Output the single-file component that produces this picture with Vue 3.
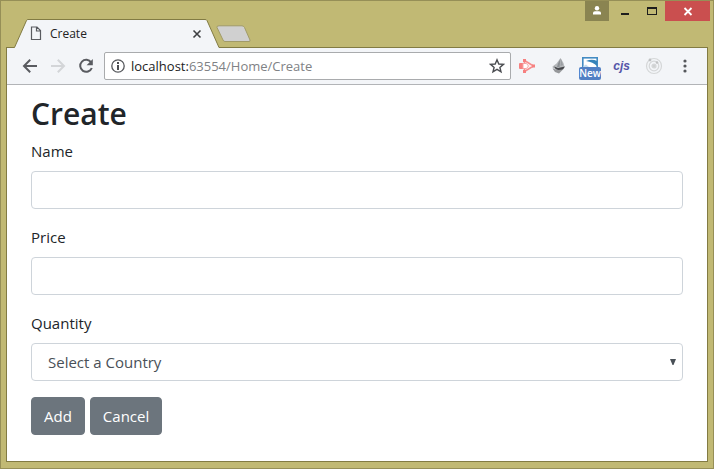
<script setup>
import { ref } from 'vue'

const name = ref('')
const price = ref('')
const country = ref('')
</script>

<template>
  <div class="window">
    <header class="titlebar">
      <div class="tabs">
        <div class="tab">
          <svg class="tab-shape" width="206" height="29" viewBox="0 0 206 29" aria-hidden="true">
            <path d="M0 28.5H.5L12.500 1.500Q13 .5 14 .5H191Q192.500 .5 193 1.500L205 28.500V29H0Z" fill="#f3f5f8" />
            <path d="M0 28.500H.5L12.500 1.500Q13 .5 14 .5H191Q192.500 .5 193 1.500L205 28.500" fill="none" stroke="#827b43" />
          </svg>
          <div class="tab-content">
            <svg width="12" height="15" viewBox="0 0 12 15" fill="none" stroke="#5a5c60" stroke-width="1.200" aria-hidden="true">
              <path d="M1.500 1H7L10.500 4.500V13.500H1.500ZM6.500 1V5H10.500" />
            </svg>
            <span class="tab-title">Create</span>
            <button class="bare" type="button" aria-label="Close tab">
              <svg width="10" height="10" viewBox="0 0 10 10" stroke="#3e4043" stroke-width="1.600">
                <path d="M1.500 1.500L8.500 8.500M8.500 1.500L1.500 8.500" />
              </svg>
            </button>
          </div>
        </div>
        <button class="bare new-tab" type="button" aria-label="New tab">
          <svg width="36" height="18" viewBox="0 0 36 18">
            <path d="M3 .8H26Q27.500 .8 28.500 2.500L34 15Q34.500 16.500 33 16.500H9Q7.500 16.500 7 15L1 2.500Q.5 .8 3 .8Z" fill="#d0d0d0" stroke="#a19b68" />
          </svg>
        </button>
      </div>
      <div class="controls">
        <button class="control user" type="button" aria-label="User profile">
          <svg width="10" height="10" viewBox="0 0 10 10" fill="#fff">
            <circle cx="5" cy="2.300" r="2.200" />
            <path d="M1 8.500V7Q1 5.300 3 5.300H7Q9 5.300 9 7V8.500Z" />
          </svg>
        </button>
        <button class="control" type="button" aria-label="Minimize">
          <svg width="10" height="10" viewBox="0 0 10 10"><path d="M1 7H9V9H1Z" fill="#1d1d1d" /></svg>
        </button>
        <button class="control" type="button" aria-label="Maximize">
          <svg width="10" height="10" viewBox="0 0 10 10"><path d="M0 1H10V9H0ZM1 3V8H9V3Z" fill="#1d1d1d" fill-rule="evenodd" /></svg>
        </button>
        <button class="control close" type="button" aria-label="Close">
          <svg width="10" height="10" viewBox="0 0 10 10" stroke="#fff" stroke-width="1.800"><path d="M1.500 2L8.500 9M8.500 2L1.500 9" /></svg>
        </button>
      </div>
    </header>

    <div class="browser">
      <nav class="toolbar" aria-label="Browser toolbar">
        <div class="history">
          <button class="bare" type="button" aria-label="Back">
            <svg width="16" height="16" viewBox="0 0 16 16" fill="none" stroke="#595b60" stroke-width="2">
              <path d="M15 8H2.500M8.200 1.700L2 8L8.200 14.300" />
            </svg>
          </button>
          <button class="bare" type="button" aria-label="Forward" disabled>
            <svg width="16" height="16" viewBox="0 0 16 16" fill="none" stroke="#d3d5d8" stroke-width="2">
              <path d="M1 8H13.500M7.800 1.700L14 8L7.800 14.300" />
            </svg>
          </button>
          <button class="bare" type="button" aria-label="Reload">
            <svg width="16" height="16" viewBox="0 0 16 16" fill="none" stroke="#595b60" stroke-width="2">
              <path d="M13.200 4.500A6 6 0 1 0 13.800 10" />
              <path d="M14.800 1V7.200H8.600Z" fill="#595b60" stroke="none" />
            </svg>
          </button>
        </div>
        <div class="address">
          <svg width="14" height="14" viewBox="0 0 14 14" aria-hidden="true">
            <circle cx="7" cy="7" r="6.200" fill="none" stroke="#55575b" stroke-width="1.300" />
            <path d="M6 3H8V5H6ZM6 6H8V11H6Z" fill="#4b4d51" />
          </svg>
          <span class="url"><span class="host">localhost:</span>63554/Home/Create</span>
          <button class="bare" type="button" aria-label="Bookmark this page">
            <svg width="16" height="16" viewBox="0 0 16 16" fill="none" stroke="#4b4d51" stroke-width="1.400">
              <path d="M8 1.800L9.800 6L14.400 6.400L10.900 9.400L12 13.800L8 11.400L4 13.800L5.100 9.400L1.600 6.400L6.200 6Z" />
            </svg>
          </button>
        </div>
        <div class="extensions">
          <button class="bare" type="button" aria-label="Screen capture">
            <svg width="18" height="16" viewBox="0 0 18 16">
              <path d="M6.500 2.500L15.500 8L6.500 13.500Z" fill="#fdf3f3" stroke="#f68f8f" stroke-width="1.600" />
              <rect x="1" y="5" width="4.500" height="6" rx="1" fill="#f68080" />
              <path d="M5 5.500H8.500L10.500 8L8.500 10.500H5Z" fill="#fff" stroke="#f9a5a5" />
              <path d="M5 1H8V4H5ZM5 12H8V15H5ZM14 6.500H17V9.500H14Z" fill="#f68080" />
            </svg>
          </button>
          <button class="bare" type="button" aria-label="Page inspector">
            <svg width="16" height="18" viewBox="0 0 16 18">
              <path d="M9.500 1L12.500 6L13.500 10L9 12L2 11.500L1.500 9.500L5.500 6.500Z" fill="#b4b7ba" />
              <path d="M9.500 1.500L7 6.500L6 10L8.500 10Z" fill="#8b8f93" />
              <path d="M10 2L9.500 9L12 8Z" fill="#9a9ea2" />
              <path d="M3 9.500L7 11L14 9.500L12 12.500L9 13.500L5 12.500Z" fill="#45474b" />
              <path d="M1.500 11.500L7 13L12 12.500L8 16.500L4 15Z" fill="#96989b" />
            </svg>
          </button>
          <button class="bare" type="button" aria-label="New screenshots">
            <svg class="shot" width="22" height="24" viewBox="0 0 22 24">
              <rect x="3.800" y="1.800" width="14.400" height="11" fill="#fff" stroke="#428bc3" stroke-width="1.600" />
              <path d="M7 5Q13 2.500 18 5V10Q14 6 7 5Z" fill="#3583b9" />
              <path d="M4.500 10L7 8.500L10 11H4.500Z" fill="#c4dced" />
              <rect y="11" width="22" height="13" rx="2" fill="#5180c4" />
              <text x="11" y="21" text-anchor="middle">New</text>
            </svg>
          </button>
          <button class="bare cjs" type="button">cjs</button>
          <button class="bare" type="button" aria-label="Orbit">
            <svg width="18" height="18" viewBox="0 0 18 18" fill="none" stroke="#d5d7d8" stroke-width="1.200">
              <circle cx="9" cy="9" r="7.500" /><circle cx="9" cy="9" r="4.800" />
              <circle cx="9" cy="9" r="2" fill="#cfd1d2" />
              <circle cx="5" cy="3" r="1.400" fill="#bfc1c2" stroke="none" /><circle cx="12" cy="5.500" r="1.300" fill="#bfc1c2" stroke="none" />
            </svg>
          </button>
          <button class="bare menu" type="button" aria-label="Menu">
            <svg width="4" height="14" viewBox="0 0 4 14" fill="#55575b">
              <circle cx="2" cy="2" r="1.600" /><circle cx="2" cy="7" r="1.600" /><circle cx="2" cy="12" r="1.600" />
            </svg>
          </button>
        </div>
      </nav>

      <main class="page">
        <h2>Create</h2>
        <form @submit.prevent>
          <div class="field">
            <label for="name">Name</label>
            <input id="name" v-model="name" class="form-control" type="text">
          </div>
          <div class="field">
            <label for="price">Price</label>
            <input id="price" v-model="price" class="form-control" type="text">
          </div>
          <div class="field">
            <label for="quantity">Quantity</label>
            <div class="select-wrap">
              <select id="quantity" v-model="country" class="form-control">
                <option value="">Select a Country</option>
              </select>
              <svg class="arrow" width="6" height="6" viewBox="0 0 6 6" aria-hidden="true"><path d="M0 0H6L3.500 6H2.500Z" fill="#495057" /></svg>
            </div>
          </div>
          <div class="actions">
            <button class="btn" type="submit">Add</button>
            <button class="btn" type="button">Cancel</button>
          </div>
        </form>
      </main>
    </div>
  </div>
</template>

<style>
body {
  margin: 0;
}
</style>

<style scoped>
* {
  box-sizing: border-box;
}

.window {
  display: flex;
  flex-direction: column;
  min-height: 100vh;
  padding: 0 5px 6px;
  border: 1px solid #968f57;
  background: #c1b974;
  font-family: "Open Sans", "Noto Sans", sans-serif;
}

svg {
  display: block;
}

button,
input,
select {
  font-family: inherit;
}

.bare {
  padding: 0;
  border: 0;
  background: none;
  color: inherit;
}

.titlebar {
  display: flex;
  align-items: flex-end;
  justify-content: space-between;
  height: 46px;
  padding-left: 8px;
}

.tabs {
  display: flex;
  align-items: center;
}

.tab {
  display: grid;
  z-index: 1;
  margin-bottom: -1px;
}

.tab-shape,
.tab-content {
  grid-area: 1 / 1;
}

.tab-content {
  display: flex;
  align-items: center;
  gap: 8px;
  padding: 0 18px 0 16px;
}

.tab-title {
  flex: 1;
  color: #222;
  font-size: 12px;
}

.new-tab {
  margin-left: -4px;
  padding-top: 2px;
}

.controls {
  display: flex;
  align-self: flex-start;
  margin-right: -2px;
}

.control {
  display: grid;
  place-items: center;
  width: 27px;
  height: 20px;
  padding: 0;
  border: 0;
  background: none;
}

.user {
  width: 24px;
  margin-right: 2px;
  background: #8a8451;
}

.close {
  width: 45px;
  background: #ca4f4f;
}

.browser {
  display: flex;
  flex: 1;
  flex-direction: column;
  border: 1px solid #827b43;
  background: #fff;
}

.toolbar {
  display: flex;
  align-items: center;
  gap: 10px;
  height: 37px;
  padding: 0 16px 0 15px;
  border-bottom: 1px solid #b2b4b7;
  background: #f3f5f8;
}

.history {
  display: flex;
  gap: 12px;
}

.address {
  display: flex;
  flex: 1;
  align-items: center;
  gap: 6px;
  height: 28px;
  padding: 0 5px 0 6px;
  border: 1px solid #a9abad;
  border-radius: 2px;
  background: #fff;
}

.url {
  flex: 1;
  color: #808285;
  font-size: 13px;
  white-space: nowrap;
}

.host {
  color: #222;
}

.extensions {
  display: flex;
  align-items: center;
  gap: 15px;
  margin-left: -3px;
}

.shot {
  margin: 4px -3px 0;
}

.shot text {
  fill: #fff;
  font-size: 10px;
  font-weight: 600;
}

.cjs {
  color: #5556a8;
  font-family: "Liberation Sans", sans-serif;
  font-size: 12px;
  font-style: italic;
  font-weight: 700;
}

.menu {
  padding: 0 4px 0 5px;
}

.page {
  padding: 10px 24px 24px;
  color: #212529;
  font-size: 15px;
  line-height: 24px;
}

h2 {
  margin: 0 0 6px;
  font-size: 30px;
  font-weight: 600;
  line-height: 38px;
}

.field {
  margin-bottom: 16px;
}

label {
  display: block;
  margin-bottom: 8px;
}

.form-control {
  display: block;
  width: 100%;
  height: 38px;
  padding: 6px 12px;
  border: 1px solid #ced4da;
  border-radius: 4px;
  background: #fff;
  color: #495057;
  font-size: 15px;
  line-height: 24px;
}

.select-wrap {
  position: relative;
}

select.form-control {
  padding-left: 16px;
  appearance: none;
}

.arrow {
  position: absolute;
  top: 16px;
  right: 7px;
  pointer-events: none;
}

.actions {
  display: flex;
  gap: 5px;
}

.btn {
  padding: 6px 12px;
  border: 1px solid #6c757d;
  border-radius: 4px;
  background: #6c757d;
  color: #fff;
  font-size: 15px;
  line-height: 24px;
}
</style>
